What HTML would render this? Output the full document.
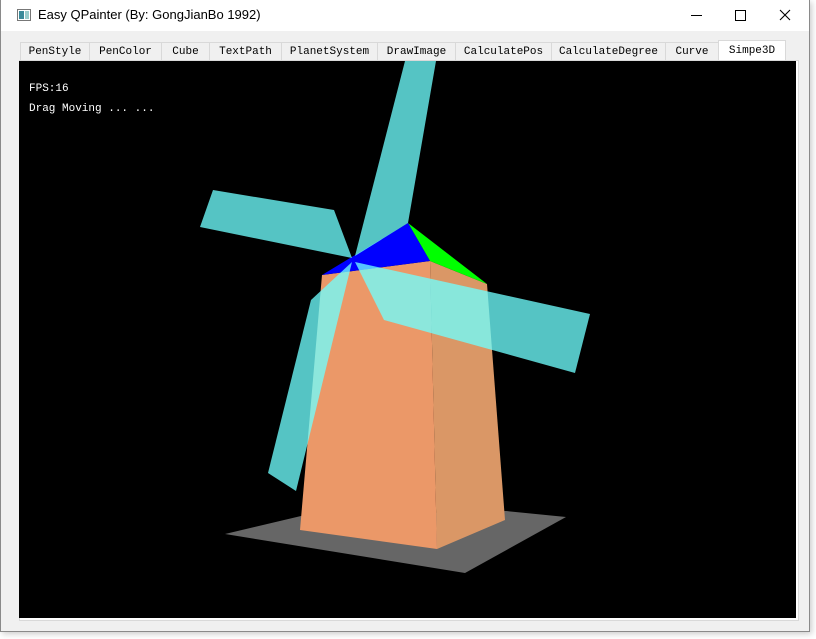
<!DOCTYPE html>
<html><head><style>
body{margin:0;width:816px;height:639px;background:#fff;position:relative;overflow:hidden;font-family:"Liberation Sans",sans-serif}
.win{position:absolute;left:0;top:0;width:808px;height:631px;border:1px solid #8a8a8a;border-top:none;background:#f0f0f0;box-shadow:2px 2px 6px rgba(0,0,0,.2)}
.title{position:absolute;left:0;top:0;width:808px;height:31px;background:#fff}
.tab{position:absolute;top:42px;height:18px;border:1px solid #d9d9d9;border-bottom:none;background:#f0f0f0;font-family:"Liberation Mono",monospace;font-size:11px;line-height:18px;text-align:center;color:#000;box-sizing:border-box}
</style></head><body>
<div class="win">
<div class="title">
<svg style="position:absolute;left:16px;top:9px" width="14" height="12"><rect x="0.5" y="0.5" width="13" height="11" fill="#fff" stroke="#777"/><rect x="2" y="2" width="5" height="8" fill="#3a8a9a"/><rect x="8" y="2" width="4" height="8" fill="#9cc"/></svg>
<div style="position:absolute;left:37px;top:7px;font-size:13px;color:#000">Easy QPainter (By: GongJianBo 1992)</div>
<div style="position:absolute;left:690px;top:15px;width:11px;height:1px;background:#000"></div>
<div style="position:absolute;left:734px;top:10px;width:9px;height:9px;border:1px solid #000"></div>
<svg style="position:absolute;left:778px;top:9px" width="12" height="12"><path d="M1 1L11 11M11 1L1 11" stroke="#000" stroke-width="1.1"/></svg>
</div>
<div class="tab" style="left:19px;width:70px">PenStyle</div>
<div class="tab" style="left:88px;width:73px">PenColor</div>
<div class="tab" style="left:160px;width:49px">Cube</div>
<div class="tab" style="left:208px;width:73px">TextPath</div>
<div class="tab" style="left:280px;width:97px">PlanetSystem</div>
<div class="tab" style="left:376px;width:79px">DrawImage</div>
<div class="tab" style="left:454px;width:97px">CalculatePos</div>
<div class="tab" style="left:550px;width:115px">CalculateDegree</div>
<div class="tab" style="left:664px;width:54px">Curve</div>
<div class="tab" style="left:717px;top:40px;height:21px;width:68px;background:#fff;line-height:20px">Simpe3D</div>
<div style="position:absolute;left:18px;top:60px;width:778px;height:559px;border:1px solid #d9d9d9;background:#fff"></div>
</div>
<svg style="position:absolute;left:0;top:0" width="816" height="639">
<rect x="19" y="61" width="777" height="557" fill="#000"/>
<text x="29" y="91" fill="#fff" font-family="Liberation Mono,monospace" font-size="11">FPS:16</text>
<text x="29" y="111" fill="#fff" font-family="Liberation Mono,monospace" font-size="11">Drag Moving ... ...</text>
<polygon points="225,534 301,516 506,511 566,517 465,573" fill="#666"/>
<polygon points="430,261 487,284 505,520 437,549" fill="#da9766"/>
<polygon points="322,275 430,261 437,549 300,530" fill="#eb9868"/>
<polygon points="408,223 487,284 430,261" fill="#00ff00"/>
<polygon points="408,223 430,261 322,275" fill="#0000ff"/>
<g fill="rgb(111,255,255)" fill-opacity="0.77">
<polygon points="355,256 405,61 436,61 408,223"/>
<polygon points="213,190 334,210 352,258 200,227"/>
<polygon points="355,262 590,314 575,373 384,320"/>
<polygon points="352,262 311,300 268,473 296,491"/>
</g>
</svg>
</body></html>
